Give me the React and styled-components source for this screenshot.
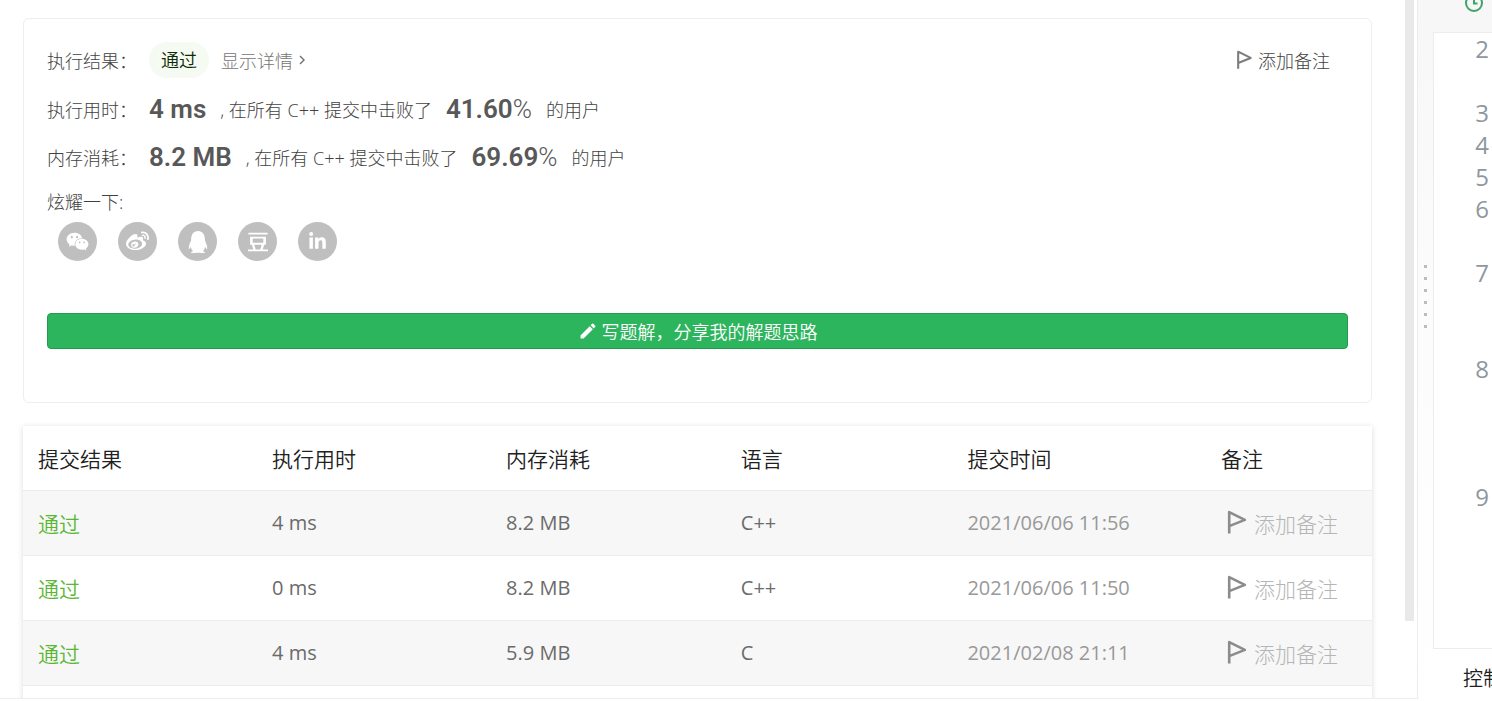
import React from "react";
import styled, { createGlobalStyle } from "styled-components";
import { AiFillWechat } from "react-icons/ai";
import { FaQq, FaLinkedinIn, FaWeibo } from "react-icons/fa";
import { SiDouban } from "react-icons/si";
import { MdEdit } from "react-icons/md";

const submissions = [
  { id: 1, time: "4 ms", memory: "8.2 MB", lang: "C++", date: "2021/06/06 11:56" },
  { id: 2, time: "0 ms", memory: "8.2 MB", lang: "C++", date: "2021/06/06 11:50" },
  { id: 3, time: "4 ms", memory: "5.9 MB", lang: "C", date: "2021/02/08 21:11" },
];

// rows = how many wrapped rows the code line takes in the editor
const codeLines = [
  { no: 2, rows: 2 },
  { no: 3, rows: 1 },
  { no: 4, rows: 1 },
  { no: 5, rows: 1 },
  { no: 6, rows: 2 },
  { no: 7, rows: 3 },
  { no: 8, rows: 4 },
  { no: 9, rows: 4 },
];

const shares = [
  { name: "微信", Icon: AiFillWechat, size: 25 },
  { name: "微博", Icon: FaWeibo, size: 23 },
  { name: "QQ", Icon: FaQq, size: 22 },
  { name: "豆瓣", Icon: SiDouban, size: 20 },
  { name: "LinkedIn", Icon: FaLinkedinIn, size: 19 },
];

const FlagIcon = ({ size }) => (
  <svg
    width={size}
    height={size}
    viewBox="0 0 24 24"
    fill="none"
    stroke="currentColor"
    strokeWidth="2.5"
    strokeLinejoin="round"
    aria-hidden="true"
  >
    <path d="M5 22.5V2L20 9.5L5 15.5" />
  </svg>
);

const App = () => {
  return (
    <Page>
      <GlobalStyle />
      <ResultPanel>
        <Scroll>
          <Card>
            <Line $height={36}>
              <Label>执行结果：</Label>
              <Status>通过</Status>
              <Detail href="#detail">
                显示详情
                <svg width="6" height="10" viewBox="0 0 6 10" fill="none" stroke="currentColor" strokeWidth="1.5">
                  <path d="M1 1L5 5L1 9" />
                </svg>
              </Detail>
              <NoteButton type="button">
                <FlagIcon size={20} />
                添加备注
              </NoteButton>
            </Line>
            <Line $height={62}>
              <Label>执行用时：</Label>
              <Strong>4 ms</Strong>
              <Text>, 在所有 C++ 提交中击败了</Text>
              <Strong>
                41.60<small>%</small>
              </Strong>
              <Text>的用户</Text>
            </Line>
            <Line $height={34}>
              <Label>内存消耗：</Label>
              <Strong>8.2 MB</Strong>
              <Text>, 在所有 C++ 提交中击败了</Text>
              <Strong>
                69.69<small>%</small>
              </Strong>
              <Text>的用户</Text>
            </Line>
            <ShareTitle>炫耀一下:</ShareTitle>
            <ShareList>
              {shares.map(({ name, Icon, size }) => (
                <ShareButton key={name} type="button" aria-label={name}>
                  <Icon size={size} />
                </ShareButton>
              ))}
            </ShareList>
            <WriteButton type="button">
              <MdEdit size={20} />
              写题解，分享我的解题思路
            </WriteButton>
          </Card>

          <TableWrap>
            <Table>
              <colgroup>
                <col width="17.35%" />
                <col width="17.35%" />
                <col width="17.4%" />
                <col width="16.8%" />
                <col width="18.8%" />
                <col />
              </colgroup>
              <thead>
                <tr>
                  <Th>提交结果</Th>
                  <Th>执行用时</Th>
                  <Th>内存消耗</Th>
                  <Th>语言</Th>
                  <Th>提交时间</Th>
                  <Th>备注</Th>
                </tr>
              </thead>
              <tbody>
                {submissions.map((item) => (
                  <Row key={item.id}>
                    <Td>
                      <Passed href="#submission">通过</Passed>
                    </Td>
                    <Td>{item.time}</Td>
                    <Td>{item.memory}</Td>
                    <Td>{item.lang}</Td>
                    <Td $muted>{item.date}</Td>
                    <Td>
                      <RowNote type="button">
                        <FlagIcon size={25} />
                        <span>添加备注</span>
                      </RowNote>
                    </Td>
                  </Row>
                ))}
              </tbody>
            </Table>
          </TableWrap>
        </Scroll>
        <ScrollTrack>
          <ScrollThumb />
        </ScrollTrack>
      </ResultPanel>

      <Splitter>
        {[1, 2, 3, 4, 5, 6].map((dot) => (
          <Dot key={dot} />
        ))}
      </Splitter>

      <EditorPanel>
        <EditorBar>
          <svg width="20" height="20" viewBox="0 0 20 20" fill="none" stroke="#3aa566" strokeWidth="2">
            <circle cx="10" cy="10" r="8" />
            <path d="M10 5V10.5H13.5" />
          </svg>
        </EditorBar>
        <Editor>
          {codeLines.map((line) => (
            <LineNumber key={line.no} $rows={line.rows}>
              {line.no}
            </LineNumber>
          ))}
        </Editor>
        <Console type="button">控制台</Console>
      </EditorPanel>
    </Page>
  );
};

export default App;

const GlobalStyle = createGlobalStyle`
  * {
    box-sizing: border-box;
  }

  body {
    margin: 0;
    background: #fff;
    overflow: hidden;
    font-family: "Open Sans", "Noto Sans CJK SC", sans-serif;
    font-weight: 300;
    color: #424242;
  }

  button {
    font: inherit;
    border: 0;
    padding: 0;
    background: none;
    cursor: pointer;
  }

  a {
    text-decoration: none;
  }
`;

const Page = styled.div`
  height: 100vh;
  display: grid;
  grid-template-columns: minmax(0, 1fr) 15px 59px;
  overflow: hidden;
`;

const ResultPanel = styled.section`
  display: flex;
  min-height: 0;
  margin-bottom: 2px;
  border-right: 1px solid #ececec;
  border-bottom: 1px solid #ececec;
  overflow: hidden;
`;

const Scroll = styled.div`
  flex: 1;
  min-width: 0;
  padding: 18px 33px 0 23px;
  overflow: hidden;
`;

const ScrollTrack = styled.div`
  width: 12px;
`;

const ScrollThumb = styled.div`
  width: 9px;
  height: 89%;
  background: #e9e9e9;
`;

const Card = styled.div`
  padding: 23px 23px 53px;
  border: 1px solid #eee;
  border-radius: 6px;
  font-size: 18px;
`;

const Line = styled.div`
  display: flex;
  align-items: center;
  height: ${(props) => props.$height}px;
`;

const Label = styled.span`
  width: 102px;
  white-space: nowrap;
`;

const Status = styled.span`
  padding: 0 12px;
  border-radius: 18px;
  line-height: 36px;
  background: #f5faf2;
  color: #0f2b05;
  font-weight: 350;
`;

const Detail = styled.a`
  display: flex;
  align-items: center;
  gap: 6px;
  margin-left: 12px;
  color: #757575;
`;

const NoteButton = styled.button`
  display: flex;
  align-items: center;
  gap: 4px;
  margin-left: auto;
  margin-right: 18px;
  color: #424242;

  svg {
    color: #7d7d7d;
  }
`;

const Strong = styled.strong`
  font-family: Roboto, sans-serif;
  font-size: 26px;
  font-weight: 600;
  color: #585858;

  small {
    font-size: 26px;
    font-weight: 300;
  }
`;

const Text = styled.span`
  margin: 0 14px;
  white-space: nowrap;
`;

const ShareTitle = styled.div`
  margin-top: 13px;
  line-height: 30px;
`;

const ShareList = styled.div`
  display: flex;
  gap: 21px;
  padding: 5px 11px 0;
`;

const ShareButton = styled.button`
  display: flex;
  align-items: center;
  justify-content: center;
  width: 39px;
  height: 39px;
  border-radius: 50%;
  background: #bfbfbf;
  color: #fff;
`;

const WriteButton = styled.button`
  display: flex;
  align-items: center;
  justify-content: center;
  gap: 4px;
  width: 100%;
  height: 36px;
  margin-top: 52px;
  border: 1px solid #269a4f;
  border-radius: 4px;
  background: #2db55d;
  color: #fff;
  font-weight: 350;
`;

const TableWrap = styled.div`
  min-height: 320px;
  margin-top: 23px;
  box-shadow: 0 1px 6px rgba(0, 0, 0, 0.14);
`;

const Table = styled.table`
  width: 100%;
  border-collapse: collapse;
  table-layout: fixed;
  font-size: 21px;
`;

const Th = styled.th`
  height: 64px;
  padding: 0 15px;
  text-align: left;
  font-weight: 350;
  color: #212121;
  border-bottom: 1px solid #ececec;
`;

const Row = styled.tr`
  background: #fff;

  &:nth-child(odd) {
    background: #f7f7f7;
  }
`;

const Td = styled.td`
  height: 65px;
  padding: 0 15px;
  white-space: nowrap;
  font-size: 20px;
  font-weight: 400;
  color: ${(props) => (props.$muted ? "#999" : "#6b6b6b")};
  border-bottom: 1px solid #ececec;
`;

const Passed = styled.a`
  font-size: 21px;
  font-weight: 350;
  color: #5ab733;
`;

const RowNote = styled.button`
  display: flex;
  align-items: center;
  gap: 5px;
  padding-left: 3px;
  font-size: 21px;
  font-weight: 300;
  color: #8c8c8c;

  span {
    color: #b5b5b5;
  }
`;

const Splitter = styled.div`
  display: flex;
  flex-direction: column;
  align-items: center;
  gap: 9px;
  padding-top: 265px;
  background: linear-gradient(#f7f7f7, #fcfcfc 45%, #fff);
`;

const Dot = styled.i`
  width: 3px;
  height: 3px;
  background: #bdbdbd;
`;

const EditorPanel = styled.section`
  display: flex;
  flex-direction: column;
  min-width: 0;
  overflow: hidden;
`;

const EditorBar = styled.div`
  height: 32px;
  padding-left: 31px;
  background: #f7f7f7;

  svg {
    display: block;
    margin-top: -7px;
  }
`;

const Editor = styled.div`
  flex: 1;
  min-height: 0;
  padding-right: 3px;
  border: 1px solid #ececec;
  border-right: 0;
  overflow: hidden;
`;

const LineNumber = styled.div`
  height: ${(props) => props.$rows * 32}px;
  line-height: 32px;
  text-align: right;
  font-size: 24px;
  font-weight: 400;
  color: #8f979e;
`;

const Console = styled.button`
  height: 52px;
  padding: 4px 0 0 30px;
  text-align: left;
  white-space: nowrap;
  font-size: 20px;
  font-weight: 350;
  color: #212121;
`;
